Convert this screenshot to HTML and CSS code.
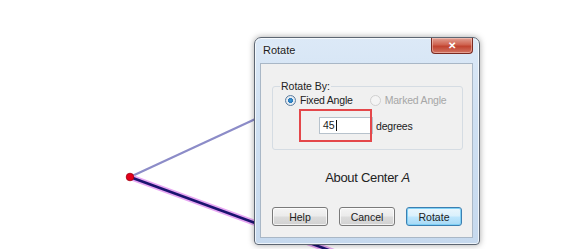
FILE: index.html
```html
<!DOCTYPE html>
<html lang="en">
<head>
    <meta charset="UTF-8">
    <title>Rotate</title>
    <link rel="stylesheet" href="styles.css">
</head>
<body>
    <div class="canvas">
        <svg class="sketch" width="574" height="249" viewBox="0 0 574 249">
            <line x1="130" y1="177" x2="290" y2="103" stroke="#8c8cc8" stroke-width="2.2"/>
            <line x1="130" y1="177" x2="345" y2="256" stroke="#e7a6f2" stroke-width="6" stroke-linecap="round"/>
            <line x1="130" y1="177" x2="345" y2="256" stroke="#1b1470" stroke-width="2.6"/>
            <circle cx="130" cy="177" r="3.8" fill="#e3001a" stroke="#a00010" stroke-width="0.8"/>
        </svg>

        <div class="dialog">
            <div class="titlebar">
                <span class="title">Rotate</span>
                <button class="close-btn">&#x2715;</button>
            </div>
            <div class="client">
                <fieldset class="group">
                    <legend>Rotate By:</legend>
                    <div class="radios">
                        <label class="radio checked"><span class="dot"></span>Fixed Angle</label>
                        <label class="radio disabled"><span class="dot"></span>Marked Angle</label>
                    </div>
                    <div class="angle-row">
                        <div class="angle-input">45<span class="caret"></span></div>
                        <span class="unit">degrees</span>
                        <span class="mark"></span>
                    </div>
                </fieldset>
                <div class="center-label">About Center <i>A</i></div>
                <div class="buttons">
                    <button class="btn">Help</button>
                    <button class="btn">Cancel</button>
                    <button class="btn default">Rotate</button>
                </div>
            </div>
        </div>
    </div>
</body>
</html>
```

FILE: styles.css
```css
body {
    margin: 0;
    background-color: #fff;
    font-family: 'Liberation Sans', Arial, sans-serif;
    color: #222;
}
.canvas {
    position: relative;
    width: 574px;
    height: 249px;
    overflow: hidden;
}
.sketch {
    position: absolute;
    left: 0;
    top: 0;
}
.dialog {
    position: absolute;
    left: 254px;
    top: 37px;
    width: 226px;
    height: 208px;
    box-sizing: border-box;
    border: 1px solid #5d6672;
    border-radius: 7px 7px 4px 4px;
    background: linear-gradient(180deg, #dce9f7 0%, #cfe0f2 40%, #c6d9ee 100%);
    box-shadow: 0 0 6px rgba(0, 0, 0, 0.35), inset 0 0 0 1px rgba(255, 255, 255, 0.7);
    padding: 0 6px 6px 5px;
    display: flex;
    flex-direction: column;
}
.titlebar {
    height: 25px;
    display: flex;
    align-items: flex-start;
}
.title {
    font-size: 11px;
    margin: 6px 0 0 3px;
    color: #1c1c1c;
    text-shadow: 0 0 4px rgba(255, 255, 255, 0.9);
}
.close-btn {
    margin-left: auto;
    width: 42px;
    height: 16px;
    padding: 0;
    border: 1px solid #7a2a22;
    border-top: none;
    border-radius: 0 0 4px 4px;
    background: linear-gradient(180deg, #e2a194 0%, #cf624f 45%, #c1432f 55%, #d27564 100%);
    color: #fff;
    font-size: 10px;
    font-weight: 700;
    line-height: 15px;
    box-shadow: inset 0 0 0 1px rgba(255, 220, 210, 0.45);
}
.client {
    flex: 1;
    background-color: #f0f0f0;
    border: 1px solid #a9b7c6;
    padding: 16px 9px 0 11px;
    display: flex;
    flex-direction: column;
}
.group {
    margin: 0;
    padding: 0 0 0 12px;
    height: 70px;
    box-sizing: border-box;
    border: 1px solid #d5dce3;
    border-radius: 3px;
    min-width: 0;
}
.group legend {
    font-size: 10.5px;
    padding: 0 1px;
    margin-left: -5px;
    margin-top: -6px;
    line-height: 12px;
}
.radios {
    display: flex;
    align-items: center;
    height: 22px;
    margin-top: -3px;
    font-size: 10.5px;
    letter-spacing: -0.2px;
}
.radio {
    display: flex;
    align-items: center;
    gap: 4px;
}
.radio + .radio {
    margin-left: 17px;
}
.dot {
    width: 11px;
    height: 11px;
    box-sizing: border-box;
    border-radius: 50%;
    border: 1px solid #8f8f8f;
    background: radial-gradient(circle, #f4f4f4 0%, #dcdcdc 100%);
}
.radio.checked .dot {
    background: radial-gradient(circle, #3f9ad8 0%, #2876b8 38%, #e8eef4 44%, #d7dde3 100%);
    border-color: #5b7da0;
}
.radio.disabled {
    color: #a6a6a6;
}
.radio.disabled .dot {
    border-color: #d0d0d0;
    background: #f4f4f4;
}
.angle-row {
    position: relative;
    display: flex;
    align-items: center;
    margin-top: 6px;
    padding-left: 34px;
    height: 17px;
}
.mark {
    position: absolute;
    z-index: 1;
    left: 14px;
    top: -8px;
    width: 73px;
    height: 33px;
    box-sizing: border-box;
    border: 2px solid #e4474a;
    pointer-events: none;
}
.angle-input {
    width: 54px;
    height: 17px;
    box-sizing: border-box;
    border: 1px solid #b7c2cc;
    background-color: #fff;
    font-size: 10.5px;
    line-height: 15px;
    padding-left: 3px;
    display: flex;
    align-items: center;
}
.caret {
    width: 1px;
    height: 11px;
    background-color: #111;
    margin-left: 1px;
}
.unit {
    font-size: 10.5px;
    margin-left: 3px;
    letter-spacing: -0.2px;
}
.center-label {
    text-align: center;
    font-size: 13px;
    margin-top: 20px;
    letter-spacing: -0.3px;
}
.buttons {
    display: flex;
    gap: 11px;
    margin-top: 22px;
}
.btn {
    width: 56px;
    height: 19px;
    padding: 0;
    border: 1px solid #7a7a7a;
    border-radius: 3px;
    background: linear-gradient(180deg, #f4f4f4 0%, #ebebeb 48%, #dcdcdc 52%, #d1d1d1 100%);
    font-family: 'Liberation Sans', Arial, sans-serif;
    font-size: 10.5px;
    color: #222;
    box-shadow: inset 0 0 0 1px rgba(255, 255, 255, 0.7);
}
.btn.default {
    border-color: #3c7fb1;
    background: linear-gradient(180deg, #eaf6fd 0%, #d9f0fc 48%, #bee6fd 52%, #a7d9f5 100%);
    box-shadow: inset 0 0 0 1px #7fd0f5;
}
```
